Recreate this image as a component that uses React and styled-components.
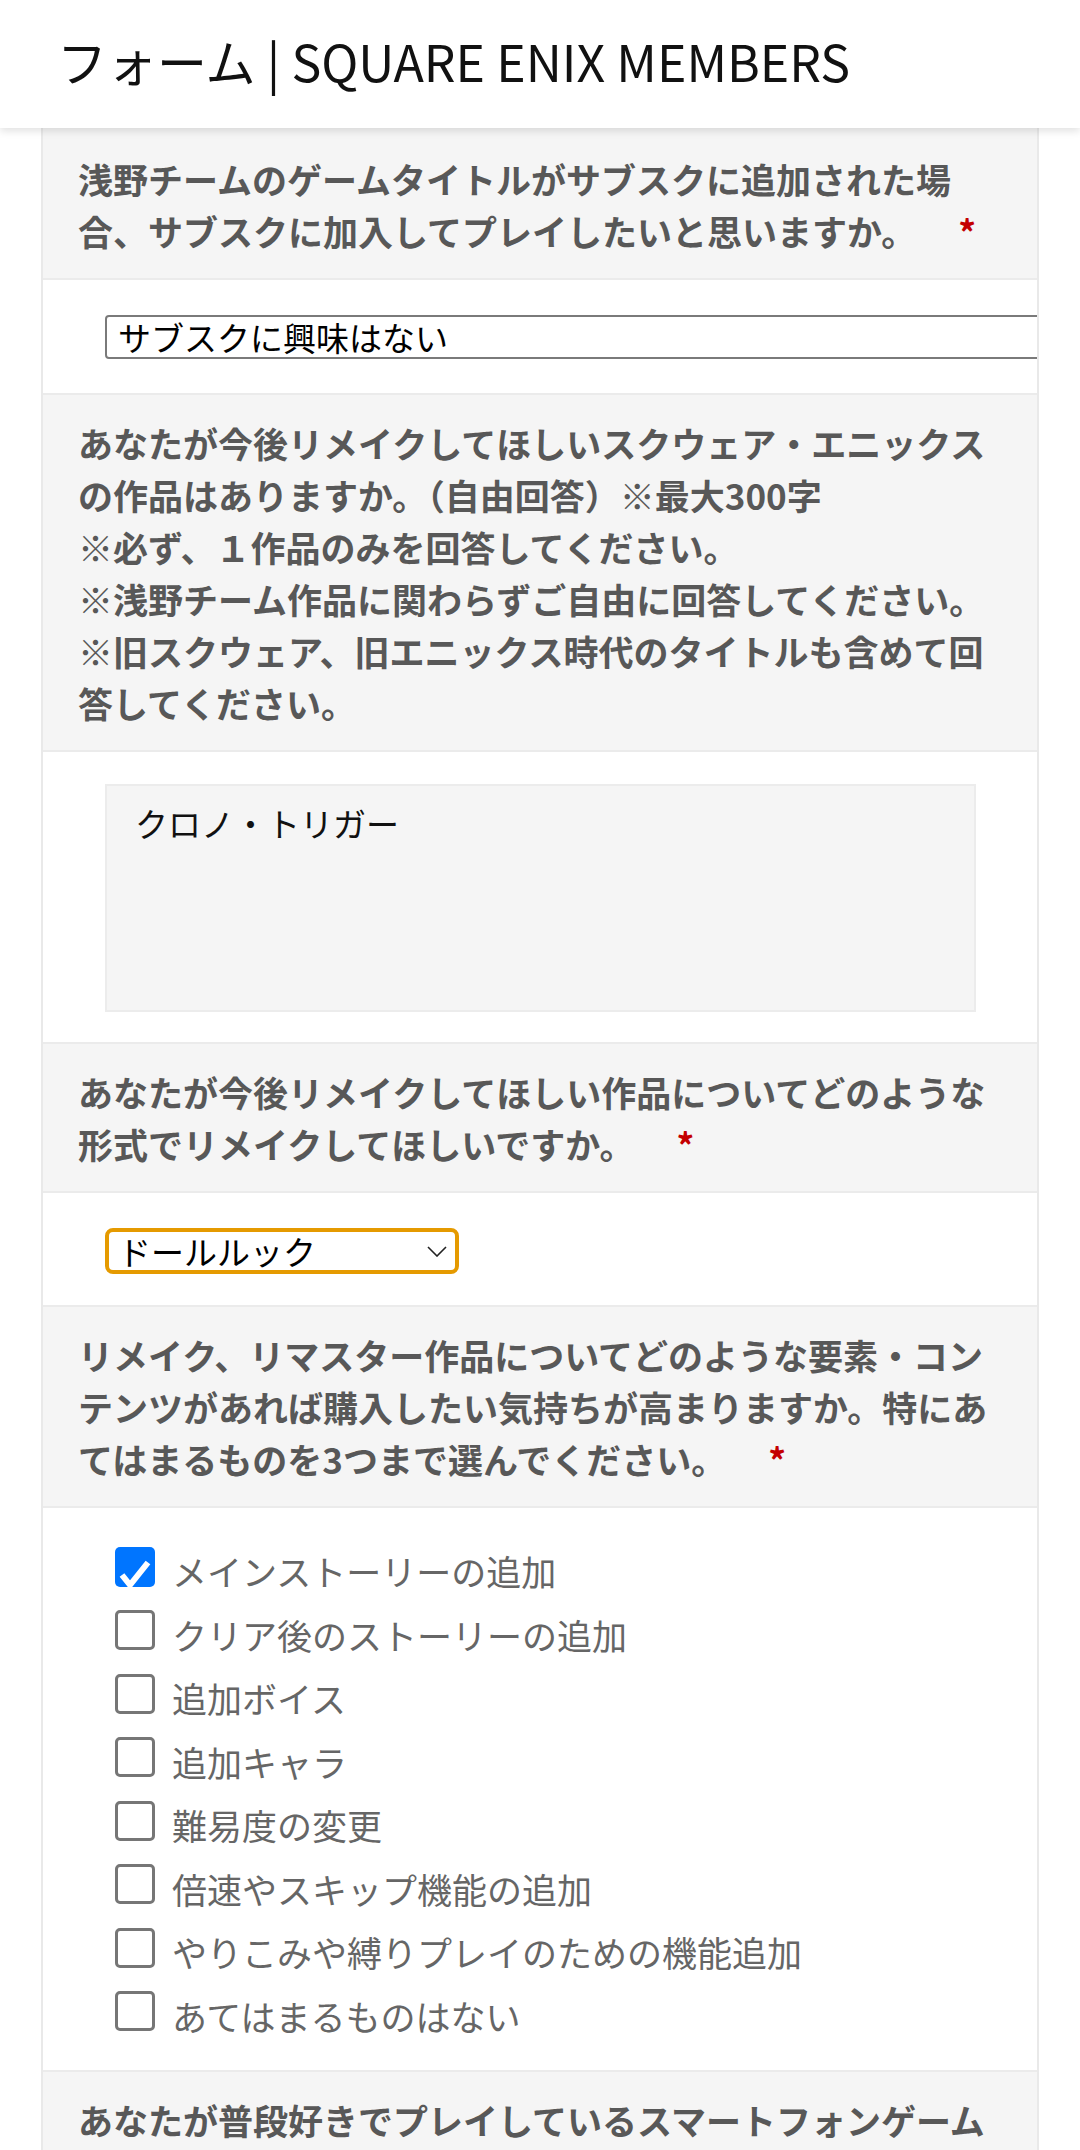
import React from "react";
import styled, { createGlobalStyle } from "styled-components";

const GlobalStyle = createGlobalStyle`
  body {
    margin: 0;
    background: #fff;
    font-family: "Noto Sans CJK JP", "Noto Sans", sans-serif;
  }
`;

const FONT = `"Noto Sans CJK JP", "Noto Sans", sans-serif`;

const options = [
  { label: "メインストーリーの追加", checked: true },
  { label: "クリア後のストーリーの追加" },
  { label: "追加ボイス" },
  { label: "追加キャラ" },
  { label: "難易度の変更" },
  { label: "倍速やスキップ機能の追加" },
  { label: "やりこみや縛りプレイのための機能追加" },
  { label: "あてはまるものはない" },
];

const App = () => {
  return (
    <>
      <GlobalStyle />
      <Header>
        <h1>フォーム | SQUARE ENIX MEMBERS</h1>
      </Header>

      <Card>
        <Question $top={25}>
          浅野チームのゲームタイトルがサブスクに追加された場合、サブスクに加入してプレイしたいと思いますか。
          <Required>*</Required>
        </Question>
        <Answer $pad="35px 0 34px 62px">
          <SelectWrap>
            <Select $wide defaultValue="none">
              <option value="none">サブスクに興味はない</option>
            </Select>
          </SelectWrap>
        </Answer>

        <Question>
          あなたが今後リメイクしてほしいスクウェア・エニックスの作品はありますか。（自由回答）※最大300字
          <br />
          ※必ず、１作品のみを回答してください。
          <br />
          ※浅野チーム作品に関わらずご自由に回答してください。
          <br />
          ※旧スクウェア、旧エニックス時代のタイトルも含めて回答してください。
        </Question>
        <Answer $pad="32px 0 30px 62px">
          <TextArea defaultValue="クロノ・トリガー" />
        </Answer>

        <Question>
          あなたが今後リメイクしてほしい作品についてどのような形式でリメイクしてほしいですか。
          <Required>*</Required>
        </Question>
        <Answer $pad="35px 0 31px 62px">
          <SelectWrap>
            <Select $focus defaultValue="doll">
              <option value="doll">ドールルック</option>
            </Select>
            <Chevron width="20" height="11" viewBox="0 0 20 11">
              <path d="M1 1 L10 10 L19 1" fill="none" stroke="#222" strokeWidth="1.6" />
            </Chevron>
          </SelectWrap>
        </Answer>

        <Question>
          リメイク、リマスター作品についてどのような要素・コンテンツがあれば購入したい気持ちが高まりますか。特にあてはまるものを3つまで選んでください。
          <Required>*</Required>
        </Question>
        <Answer $pad="27px 0 27px 72px">
          <CheckList>
            {options.map((o) => (
              <CheckItem key={o.label}>
                <Box $checked={o.checked}>
                  {o.checked && (
                    <svg width="40" height="40" viewBox="0 0 40 40">
                      <path
                        d="M7 20 L15 30 L33 7.5"
                        fill="none"
                        stroke="#fff"
                        strokeWidth="6"
                      />
                    </svg>
                  )}
                </Box>
                <span>{o.label}</span>
              </CheckItem>
            ))}
          </CheckList>
        </Answer>

        <Question>
          あなたが普段好きでプレイしているスマートフォンゲームのタイトルを教えてください。
        </Question>
      </Card>
    </>
  );
};

export default App;

const Header = styled.header`
  position: relative;
  z-index: 2;
  height: 128px;
  display: flex;
  align-items: center;
  padding-left: 57px;
  background: #fff;
  box-shadow: 0 3px 8px rgba(0, 0, 0, 0.12);
  h1 {
    margin: 0;
    font-family: ${FONT};
    font-weight: 400;
    font-size: 50px;
    line-height: 1;
    color: #111;
    padding-bottom: 8px;
  }
`;

const Card = styled.main`
  margin: 0 41px;
  border-left: 2px solid #e9e9e9;
  border-right: 2px solid #e9e9e9;
  overflow: hidden;
`;

const Question = styled.div`
  background: #f5f5f5;
  padding: ${(p) => p.$top || 22}px 35px 21px;
  border-bottom: 2px solid #ebebeb;
  font-family: ${FONT};
  font-weight: 700;
  font-size: 35px;
  line-height: 52px;
  color: #585858;
`;

const Required = styled.span`
  margin-left: 42px;
  color: #c40000;
  font-weight: 700;
`;

const Answer = styled.div`
  background: #fff;
  padding: ${(p) => p.$pad};
  border-bottom: 2px solid #ebebeb;
`;

const SelectWrap = styled.div`
  position: relative;
  display: inline-block;
`;

const Select = styled.select`
  appearance: none;
  display: block;
  box-sizing: border-box;
  width: ${(p) => (p.$wide ? "980px" : "354px")};
  height: ${(p) => (p.$focus ? "46px" : "44px")};
  padding: 0 0 0 ${(p) => (p.$focus ? "9px" : "11px")};
  border: ${(p) => (p.$focus ? "4px solid #e59a00" : "2px solid #7a7a7a")};
  border-radius: ${(p) => (p.$focus ? "8px" : "4px")};
  background: #fff;
  font-family: ${FONT};
  font-size: 33px;
  line-height: 38px;
  color: #000;
  outline: none;
`;

const Chevron = styled.svg`
  position: absolute;
  right: 12px;
  top: 18px;
  pointer-events: none;
`;

const TextArea = styled.textarea`
  display: block;
  box-sizing: border-box;
  width: 871px;
  height: 228px;
  margin: 0;
  padding: 14px 28px;
  background: #f5f5f5;
  border: 2px solid #ececec;
  border-radius: 0;
  resize: none;
  font-family: ${FONT};
  font-size: 33px;
  line-height: 46px;
  color: #111;
  outline: none;
`;

const CheckList = styled.div`
  display: flex;
  flex-direction: column;
`;

const CheckItem = styled.label`
  display: flex;
  align-items: center;
  gap: 17px;
  height: 63.5px;
  font-family: ${FONT};
  font-size: 35px;
  color: #666;
  span {
    line-height: 1;
    padding-top: 8px;
  }
`;

const Box = styled.span`
  flex: none;
  box-sizing: border-box;
  width: 40px;
  height: 40px;
  border-radius: 5px;
  border: ${(p) => (p.$checked ? "none" : "3px solid #767676")};
  background: ${(p) => (p.$checked ? "#0075ff" : "#fff")};
  svg {
    display: block;
  }
`;
